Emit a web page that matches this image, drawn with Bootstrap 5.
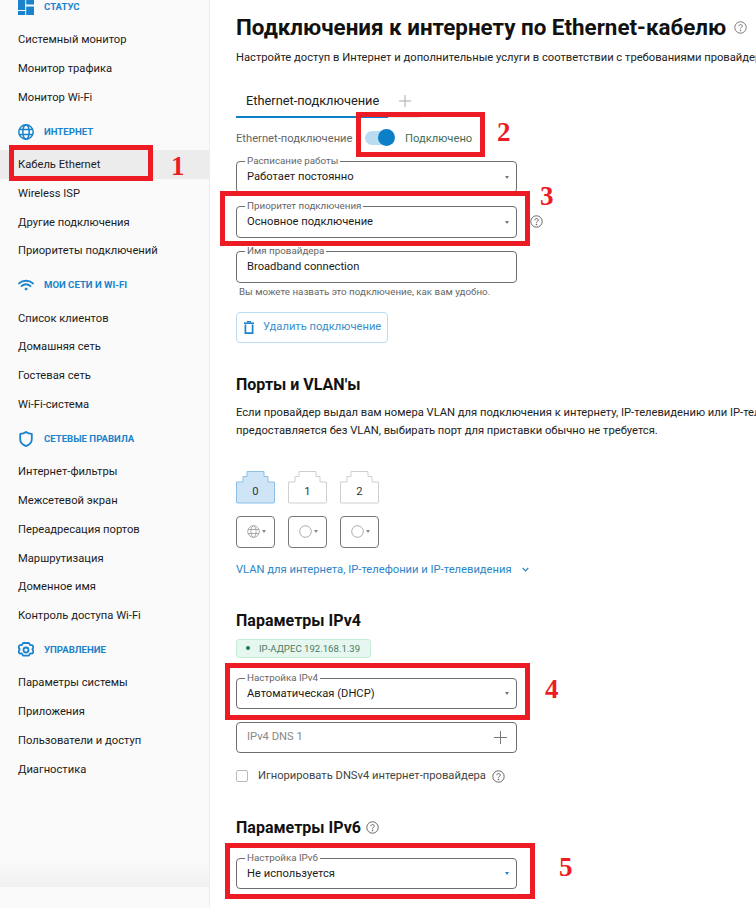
<!DOCTYPE html>
<html lang="ru">
<head>
<meta charset="utf-8">
<title>Подключения</title>
<link href="https://cdn.jsdelivr.net/npm/bootstrap@5.3.0/dist/css/bootstrap.min.css" rel="stylesheet">
<style>
html,body{margin:0;height:908px;overflow:hidden;background:#fff}
body{font-family:Roboto,"Liberation Sans",sans-serif;font-size:11.2px;color:#111;position:relative}
.shell{height:908px;width:756px;overflow:hidden}
.side{width:210px;flex:0 0 210px;background:#fafafa;border-right:1px solid #ededed;height:908px}
.side-scroll{margin-top:-13.2px}
.side-head{height:38.4px;padding:2px 0 0 18px;gap:10px;color:#1a83cc;font-size:9.6px;font-weight:700;text-transform:uppercase}
.side-head svg{width:16px;height:16px;flex:0 0 16px}
.side-link{display:block;height:28.8px;line-height:28.8px;padding:1px 0 0 18px;color:#1c1c1c;font-size:11.2px;text-decoration:none}
.side-link.sel{background:#ececec}
.side-fade{height:27px;background:linear-gradient(#fafafa,#f0f0f0);margin-bottom:21px}
.main-area{padding-left:26px;min-width:0;flex:1 1 auto;overflow:hidden;white-space:nowrap}
.page-title{font-size:22.4px;font-weight:700;line-height:26px;margin:14px 0 0;color:#111;gap:8px}
.intro{font-size:11.2px;line-height:16px;margin:10px 0 0;color:#222}
.tabbar{margin-top:24px;height:28px;width:184px;gap:10px;border-bottom:2px solid #e8e8e8}
.tab-on{width:152px;height:28px;flex:0 0 152px;border-bottom:2px solid #0c7fc7;padding-left:10px;line-height:22px;font-size:12.8px;color:#222}
.tab-plus{width:14px;height:14px;margin-top:4px}
.state-row{height:22px;margin-top:10px;color:#666}
.state-label{width:129px}
.switch-bar{width:29px;height:14px;background:#b9dcf1;border-radius:7px;position:relative;margin:-3px 11px 0 0}
.switch-knob{width:17px;height:17px;border-radius:50%;background:#0c7fc7;position:absolute;right:-1px;top:-1.5px}
.state-on{color:#3f6f55}
.outline-box{width:281px;flex:0 0 281px;height:31.5px;border:1px solid #6e6e6e;border-radius:4px;padding:1px 10px 0;position:relative;background:#fff}
.box-tag{position:absolute;left:8px;top:-6px;font-size:9.8px;line-height:10px;padding:0 2px;color:#666;background:#fff}
.box-value{font-size:11.2px;color:#1c1c1c;line-height:16px}
.box-caret{width:0;height:0;border-left:2.5px solid transparent;border-right:2.5px solid transparent;border-top:3.5px solid #777;margin-right:-3px}
.box-caret.blue-caret{border-top-color:#1a83cc}
.box-first{margin-top:11px}
.gap-next{margin-top:13.5px}
.help-ico{width:13px;height:13px;flex:none}
.help-side{margin-left:13px}
.hint-text{font-size:9.8px;color:#666;margin:2.5px 0 0 3px;line-height:14px}
.drop-btn{width:152px;height:31.5px;margin-top:12.5px;border:1px solid #bcdcf0;border-radius:4px;color:#3b8fcb;padding:1px 0 0 7px;gap:9px;font-size:11.2px;background:#fff}
.h-sect{font-size:16px;font-weight:700;line-height:20px;margin:0;color:#111}
.sect-ports{margin-top:32px}
.para{line-height:18px;margin:9px 0 0;color:#222}
.port-line{gap:13px}
.ports-a{margin-top:30.5px}
.port-cell{width:39px;height:33px;position:relative;font-size:11.2px}
.port-cell svg{width:39px;height:33px;display:block}
.port-cell span{position:absolute;left:0;right:0;bottom:6px;text-align:center;color:#333;line-height:13px}
.ports-b{margin-top:12px}
.vlan-pick{width:39px;height:32px;border:1px solid #777;border-radius:4px;gap:2px;padding-left:2px}
.vlan-pick i{display:block;width:0;height:0;border-left:2.5px solid transparent;border-right:2.5px solid transparent;border-top:3.5px solid #888}
.vlan-link{color:#2a86c8;margin-top:15px;line-height:14px;gap:10px}
.sect-v4{margin-top:34px}
.ip-chip{width:135px;height:18.5px;margin-top:8.5px;background:#e6f7ef;border:1px solid #c4ecd7;border-radius:3px;color:#4d7a63;font-size:9.6px;padding:2px 0 0 9px;gap:9px}
.ip-dot{width:4px;height:4px;border-radius:50%;background:#1c7a53;margin-top:-2px}
.box-v4{margin-top:20px}
.box-dns{margin-top:12.5px;color:#888}
.box-dns svg{margin-right:-1px}
.check-line{margin-top:15px;color:#444;height:16px}
.check-line .form-check-input{width:12px;height:12px;margin:0 10px 0 0;border-color:#bbb;border-radius:2px;flex:none}
.help-check{margin-left:6px}
.sect-v6{margin-top:33.5px;gap:5px}
.box-v6{margin-top:20px}
.mark-box{position:absolute;border:5px solid #ed1c24;pointer-events:none}
.mark-num{position:absolute;color:#ed1c24;font:700 27px/27px "Liberation Serif",serif}
</style>
</head>
<body>
<div class="shell d-flex">
  <aside class="side d-flex flex-column">
    <nav class="side-scroll nav flex-column flex-nowrap flex-grow-1">
      <div class="side-head d-flex align-items-center">
        <svg viewBox="0 0 16 16" fill="#1a83cc"><rect x="0" y="0" width="7.200" height="11"/><rect x="8.200" y="0" width="7.800" height="5.500"/><rect x="0" y="12" width="7.200" height="4"/><rect x="8.200" y="7.500" width="7.800" height="8.500"/></svg>Статус</div>
      <a class="side-link" href="#">Системный монитор</a>
      <a class="side-link" href="#">Монитор трафика</a>
      <a class="side-link" href="#">Монитор Wi-Fi</a>
      <div class="side-head d-flex align-items-center">
        <svg viewBox="0 0 16 16" fill="none" stroke="#1a83cc" stroke-width="1.5"><circle cx="8" cy="8" r="7.200"/><ellipse cx="8" cy="8" rx="3.200" ry="7.200"/><path d="M1 5.600h14M1 10.400h14"/></svg>Интернет</div>
      <a class="side-link sel" href="#">Кабель Ethernet</a>
      <a class="side-link" href="#">Wireless ISP</a>
      <a class="side-link" href="#">Другие подключения</a>
      <a class="side-link" href="#">Приоритеты подключений</a>
      <div class="side-head d-flex align-items-center">
        <svg viewBox="0 0 16 16" fill="none" stroke="#1a83cc" stroke-width="1.900" stroke-linecap="round"><path d="M1 6.400c4-3.600 10-3.600 14 0"/><path d="M3.600 9.100c2.600-2.100 6.200-2.100 8.800 0"/><circle cx="8" cy="12" r="1" fill="#1a83cc" stroke-width="1"/></svg>Мои сети и Wi-Fi</div>
      <a class="side-link" href="#">Список клиентов</a>
      <a class="side-link" href="#">Домашняя сеть</a>
      <a class="side-link" href="#">Гостевая сеть</a>
      <a class="side-link" href="#">Wi-Fi-система</a>
      <div class="side-head d-flex align-items-center">
        <svg viewBox="0 0 16 16" fill="none" stroke="#1a83cc" stroke-width="1.800" stroke-linejoin="round"><path d="M8 .9c1.800 1.300 3.600 1.800 5.800 1.900v5.500c0 3.200-2.400 5.400-5.800 6.800-3.400-1.400-5.800-3.600-5.800-6.800V2.800C4.400 2.700 6.200 2.200 8 .9z"/></svg>Сетевые правила</div>
      <a class="side-link" href="#">Интернет-фильтры</a>
      <a class="side-link" href="#">Межсетевой экран</a>
      <a class="side-link" href="#">Переадресация портов</a>
      <a class="side-link" href="#">Маршрутизация</a>
      <a class="side-link" href="#">Доменное имя</a>
      <a class="side-link" href="#">Контроль доступа Wi-Fi</a>
      <div class="side-head d-flex align-items-center">
        <svg viewBox="0 0 16 16" fill="none" stroke="#1a83cc" stroke-width="1.800" stroke-linejoin="round"><path d="M5.600 1h4.800c.6 0 1 .4 1.100.9.2 1.100 1 1.500 2 1.200.5-.1 1 .1 1.200.5l.6 1.200c.2.400.1.900-.2 1.200-.9.900-.9 1.700 0 2.600.3.300.4.800.2 1.200l-.6 1.200c-.2.400-.7.600-1.200.5-1-.3-1.800.1-2 1.200-.1.500-.5.900-1.100.9H5.600c-.6 0-1-.4-1.100-.9-.2-1.100-1-1.500-2-1.200-.5.100-1-.1-1.200-.5l-.6-1.200c-.2-.4-.1-.9.200-1.200.9-.9.9-1.700 0-2.600-.3-.3-.4-.8-.2-1.200l.6-1.200c.2-.4.700-.6 1.200-.5 1 .3 1.800-.1 2-1.200.1-.5.500-.9 1.100-.9z"/><circle cx="8" cy="8" r="2.500"/></svg>Управление</div>
      <a class="side-link" href="#">Параметры системы</a>
      <a class="side-link" href="#">Приложения</a>
      <a class="side-link" href="#">Пользователи и доступ</a>
      <a class="side-link" href="#">Диагностика</a>
    </nav>
    <div class="side-fade"></div>
  </aside>

  <main class="main-area">
    <h1 class="page-title d-flex align-items-center">Подключения к интернету по Ethernet-кабелю
      <svg class="help-ico" viewBox="0 0 13 13" fill="none" stroke="#777"><circle cx="6.500" cy="6.500" r="5.700"/><path d="M4.800 5.200c0-2.200 3.500-2.200 3.500-.1 0 1.300-1.800 1.300-1.800 2.600"/><circle cx="6.500" cy="9.500" r=".4" fill="#777"/></svg></h1>
    <p class="intro">Настройте доступ в Интернет и дополнительные услуги в соответствии с требованиями провайдера.</p>

    <div class="tabbar d-flex">
      <div class="tab-on">Ethernet-подключение</div>
      <svg class="tab-plus" viewBox="0 0 14 14" stroke="#aaa" stroke-width="1"><path d="M7 1v12M1 7h12"/></svg>
    </div>

    <div class="state-row d-flex align-items-center">
      <span class="state-label">Ethernet-подключение</span>
      <span class="switch-bar"><span class="switch-knob"></span></span>
      <span class="state-on">Подключено</span>
    </div>

    <div class="outline-box box-value box-first d-flex align-items-center justify-content-between"><span class="box-tag">Расписание работы</span><span>Работает постоянно</span><span class="box-caret"></span></div>
    <div class="d-flex align-items-center gap-next">
      <div class="outline-box box-value d-flex align-items-center justify-content-between"><span class="box-tag">Приоритет подключения</span><span>Основное подключение</span><span class="box-caret"></span></div>
      <svg class="help-ico help-side" viewBox="0 0 13 13" fill="none" stroke="#666"><circle cx="6.500" cy="6.500" r="5.700"/><path d="M4.800 5.200c0-2.200 3.500-2.200 3.500-.1 0 1.300-1.800 1.300-1.800 2.600"/><circle cx="6.500" cy="9.500" r=".4" fill="#666"/></svg>
    </div>
    <div class="outline-box box-value gap-next d-flex align-items-center"><span class="box-tag">Имя провайдера</span><span>Broadband connection</span></div>
    <p class="hint-text">Вы можете назвать это подключение, как вам удобно.</p>
    <div class="drop-btn d-flex align-items-center">
      <svg width="10" height="13" viewBox="0 0 10 13" fill="none" stroke="#1a83cc" stroke-width="1.700"><path d="M1.400 3.500v8.700h7.200V3.500"/><path d="M0 2.200h10" stroke-width="1.600"/><path d="M3 .7h4" stroke-width="1.400"/></svg>
      <span>Удалить подключение</span>
    </div>

    <h2 class="h-sect sect-ports">Порты и VLAN'ы</h2>
    <p class="para">Если провайдер выдал вам номера VLAN для подключения к интернету, IP-телевидению или IP-телефонии, укажите их здесь.<br>предоставляется без VLAN, выбирать порт для приставки обычно не требуется.</p>

    <div class="d-flex port-line ports-a">
      <div class="port-cell"><svg viewBox="0 0 39 33"><path d="M.5 32V11H7V5.500h4V.5h17v5h4V11h6.500v20c0 .6-.4 1-1 1H1.500c-.6 0-1-.4-1-1z" fill="#cfe5f6" stroke="#8cc0e6"/></svg><span>0</span></div>
      <div class="port-cell"><svg viewBox="0 0 39 33"><path d="M.5 32V11H7V5.500h4V.5h17v5h4V11h6.500v20c0 .6-.4 1-1 1H1.500c-.6 0-1-.4-1-1z" fill="#fff" stroke="#cfcfcf"/></svg><span>1</span></div>
      <div class="port-cell"><svg viewBox="0 0 39 33"><path d="M.5 32V11H7V5.500h4V.5h17v5h4V11h6.500v20c0 .6-.4 1-1 1H1.500c-.6 0-1-.4-1-1z" fill="#fff" stroke="#cfcfcf"/></svg><span>2</span></div>
    </div>
    <div class="d-flex port-line ports-b">
      <div class="vlan-pick d-flex align-items-center justify-content-center">
        <svg width="13" height="13" viewBox="0 0 13 13" fill="none" stroke="#aaa"><circle cx="6.500" cy="6.500" r="5.800"/><ellipse cx="6.500" cy="6.500" rx="2.600" ry="5.800"/><path d="M1 4.500h11M1 8.500h11"/></svg><i></i></div>
      <div class="vlan-pick d-flex align-items-center justify-content-center">
        <svg width="13" height="13" viewBox="0 0 13 13" fill="none" stroke="#aaa"><circle cx="6.500" cy="6.500" r="5.800"/></svg><i></i></div>
      <div class="vlan-pick d-flex align-items-center justify-content-center">
        <svg width="13" height="13" viewBox="0 0 13 13" fill="none" stroke="#aaa"><circle cx="6.500" cy="6.500" r="5.800"/></svg><i></i></div>
    </div>
    <div class="vlan-link d-flex align-items-center">VLAN для интернета, IP-телефонии и IP-телевидения
      <svg width="7" height="5" viewBox="0 0 7 5" fill="none" stroke="#2a86c8" stroke-width="1.200"><path d="M.7 1l2.800 2.800L6.300 1"/></svg></div>

    <h2 class="h-sect sect-v4">Параметры IPv4</h2>
    <div class="ip-chip d-flex align-items-center"><span class="ip-dot"></span>IP-АДРЕС 192.168.1.39</div>
    <div class="outline-box box-value box-v4 d-flex align-items-center justify-content-between"><span class="box-tag">Настройка IPv4</span><span>Автоматическая (DHCP)</span><span class="box-caret"></span></div>
    <div class="outline-box box-dns d-flex justify-content-between align-items-center"><span>IPv4 DNS 1</span>
      <svg width="13" height="13" viewBox="0 0 13 13" stroke="#777" stroke-width="1"><path d="M6.500 0v13M0 6.500h13"/></svg></div>
    <div class="check-line d-flex align-items-center">
      <input class="form-check-input" type="checkbox" aria-label="Игнорировать"><span>Игнорировать DNSv4 интернет-провайдера</span>
      <svg class="help-ico help-check" viewBox="0 0 13 13" fill="none" stroke="#666"><circle cx="6.500" cy="6.500" r="5.700"/><path d="M4.800 5.200c0-2.200 3.500-2.200 3.500-.1 0 1.300-1.800 1.300-1.800 2.600"/><circle cx="6.500" cy="9.500" r=".4" fill="#666"/></svg>
    </div>

    <h2 class="h-sect sect-v6 d-flex align-items-center">Параметры IPv6
      <svg class="help-ico" viewBox="0 0 13 13" fill="none" stroke="#666"><circle cx="6.500" cy="6.500" r="5.700"/><path d="M4.800 5.200c0-2.200 3.500-2.200 3.500-.1 0 1.300-1.800 1.300-1.800 2.600"/><circle cx="6.500" cy="9.500" r=".4" fill="#666"/></svg></h2>
    <div class="outline-box box-value box-v6 d-flex align-items-center justify-content-between"><span class="box-tag">Настройка IPv6</span><span>Не используется</span><span class="box-caret blue-caret"></span></div>
  </main>
</div>

<div class="mark-box" style="left:9px;top:145px;width:144px;height:36px"></div>
<div class="mark-box" style="left:356px;top:112px;width:129px;height:45px"></div>
<div class="mark-box" style="left:220px;top:191px;width:310px;height:55px"></div>
<div class="mark-box" style="left:225px;top:663px;width:305px;height:57px"></div>
<div class="mark-box" style="left:225px;top:843px;width:310px;height:56px"></div>
<div class="mark-num" style="left:171px;top:153px">1</div>
<div class="mark-num" style="left:497px;top:119px">2</div>
<div class="mark-num" style="left:540px;top:183px">3</div>
<div class="mark-num" style="left:545px;top:676px">4</div>
<div class="mark-num" style="left:559px;top:854px">5</div>
<script src="https://cdn.jsdelivr.net/npm/bootstrap@5.3.0/dist/js/bootstrap.bundle.min.js"></script>
</body>
</html>
